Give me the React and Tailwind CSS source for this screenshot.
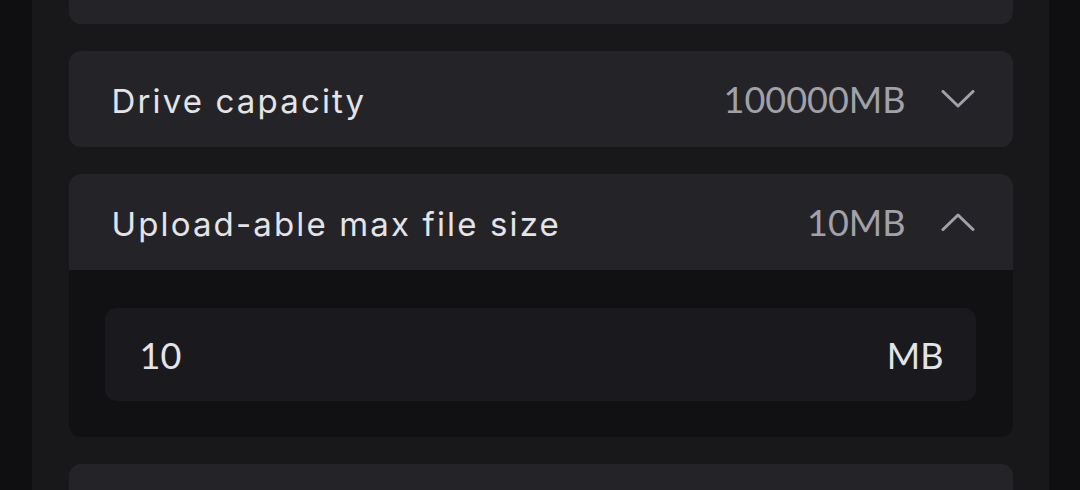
import { useState } from 'react';

const ROWS = [
  { label: 'Drive capacity', value: '100000MB', unit: 'MB', amount: '100000' },
  { label: 'Upload-able max file size', value: '10MB', unit: 'MB', amount: '10' },
];

function Chevron({ up }) {
  return (
    <svg width="34" height="18" viewBox="0 0 34 18" fill="none" stroke="#a1a1aa" strokeWidth="3" strokeLinecap="round" strokeLinejoin="round">
      {up ? <path d="M2 16.5L17 2l15 14.5" /> : <path d="M2 1.5L17 16l15-14.5" />}
    </svg>
  );
}

function SettingRow({ row, open, onToggle }) {
  return (
    <div className="shrink-0 rounded-xl overflow-hidden bg-[#111114]">
      <button
        onClick={onToggle}
        className="w-full h-[96px] flex items-center justify-between pl-[43px] pr-[38px] bg-[#242428] text-left"
      >
        <span className="mt-[5px] text-[33px] text-[#e4e4e7] font-['Inter',sans-serif] tracking-[0.065em]">{row.label}</span>
        <span className="flex items-center gap-[35px]">
          <span className="text-[36px] text-[#a1a1aa] font-['Lato',sans-serif]">{row.value}</span>
          <Chevron up={open} />
        </span>
      </button>
      {open && (
        <div className="pt-[38px] pb-[36px] pl-[36px] pr-[37px]">
          <div className="h-[93px] rounded-xl bg-[#1a1a1e] flex items-center justify-between pl-[35px] pr-[32px]">
            <span className="text-[36px] text-[#e4e4e7] font-['Lato',sans-serif]">{row.amount}</span>
            <span className="text-[36px] text-[#e4e4e7] font-['Lato',sans-serif]">{row.unit}</span>
          </div>
        </div>
      )}
    </div>
  );
}

export default function App() {
  const [openIdx, setOpenIdx] = useState(1);

  return (
    <div className="w-[1080px] h-[490px] overflow-hidden bg-[#0f0f12] flex justify-center">
      <div className="w-[1017px] h-full bg-[#18181b] pl-[37px] pr-[36px] flex flex-col gap-[27px]">
        <div className="h-[24px] shrink-0 rounded-b-xl bg-[#242428]" />
        {ROWS.map((row, i) => (
          <SettingRow
            key={row.label}
            row={row}
            open={openIdx === i}
            onToggle={() => setOpenIdx(openIdx === i ? -1 : i)}
          />
        ))}
        <div className="h-[96px] shrink-0 rounded-xl bg-[#242428]" />
      </div>
    </div>
  );
}
